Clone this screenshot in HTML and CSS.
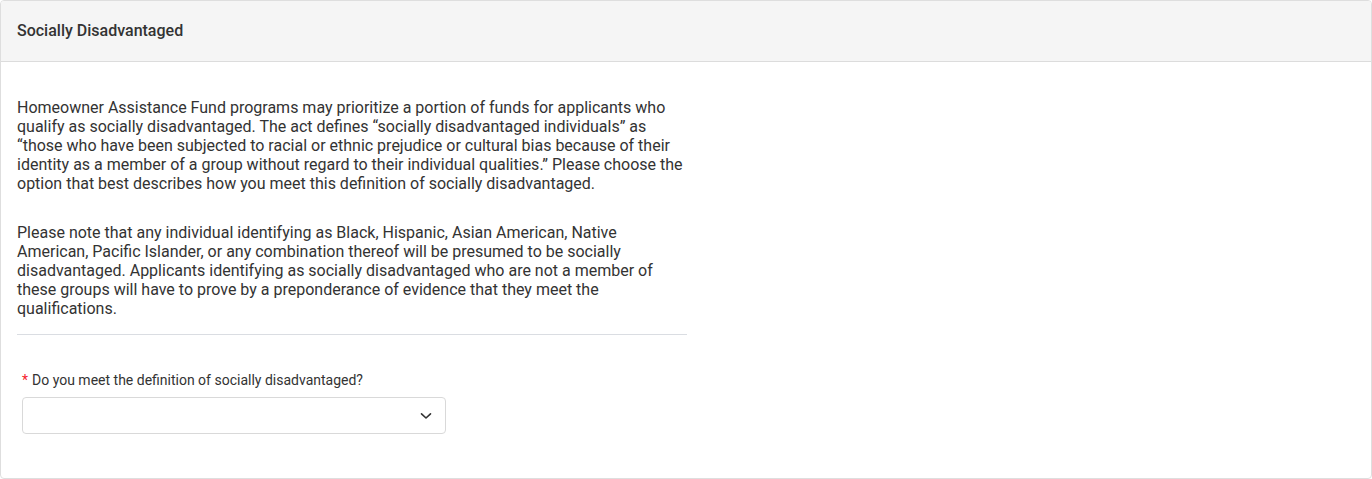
FILE: index.html
```html
<!DOCTYPE html>
<html lang="en">
<head>
<meta charset="utf-8">
<title>Socially Disadvantaged</title>
<link rel="stylesheet" href="styles.css">
</head>
<body>
<div class="card">
  <div class="card-header">
    <h2 class="card-title">Socially Disadvantaged</h2>
  </div>
  <div class="card-body">
    <div class="column">
      <p class="para">Homeowner Assistance Fund programs may prioritize a portion of funds for applicants who qualify as socially disadvantaged. The act defines “socially disadvantaged individuals” as “those who have been subjected to racial or ethnic prejudice or cultural bias because of their identity as a member of a group without regard to their individual qualities.” Please choose the option that best describes how you meet this definition of socially disadvantaged.</p>
      <p class="para para-second">Please note that any individual identifying as Black, Hispanic, Asian American, Native American, Pacific Islander, or any combination thereof will be presumed to be socially disadvantaged. Applicants identifying as socially disadvantaged who are not a member of these groups will have to prove by a preponderance of evidence that they meet the qualifications.</p>
      <hr class="divider">
      <div class="form-item">
        <label class="form-label"><span class="required">*</span>Do you meet the definition of socially disadvantaged?</label>
        <div class="select">
          <span class="select-value"></span>
          <svg class="chevron" width="12" height="8" viewBox="0 0 12 8" aria-hidden="true"><path d="M1.5 1.8 L6 6 L10.5 1.8" fill="none" stroke="#333" stroke-width="1.6" stroke-linecap="round" stroke-linejoin="round"/></svg>
        </div>
      </div>
    </div>
  </div>
</div>
</body>
</html>
```
FILE: styles.css
```css
* { box-sizing: border-box; }
html, body { margin: 0; padding: 0; background: #fff; }
body {
  font-family: Roboto, "Liberation Sans", Arial, sans-serif;
  color: #333;
  width: 1372px;
  height: 479px;
}
.card {
  border: 1px solid #dedede;
  border-radius: 4px;
  height: 479px;
  background: #fff;
  overflow: hidden;
}
.card-header {
  height: 61px;
  background: #f5f5f5;
  border-bottom: 1px solid #dcdcdc;
  display: flex;
  align-items: center;
  padding: 0 16px;
}
.card-title {
  margin: 0;
  font-size: 16px;
  font-weight: 500;
  color: #333;
  line-height: 20px;
}
.card-body {
  padding: 36px 16px 44px 16px;
}
.column {
  width: 670px;
}
.para {
  margin: 0;
  font-size: 16px;
  line-height: 19px;
  color: #333;
}
.para-second {
  margin-top: 30px;
}
.divider {
  margin: 16px 0 0 0;
  border: 0;
  border-top: 1px solid #dadde2;
  height: 0;
}
.form-item {
  margin: 35px 0 0 5px;
}
.form-label {
  display: block;
  font-size: 14px;
  line-height: 20px;
  color: #333;
  margin-bottom: 7px;
}
.required {
  color: #f5222d;
  margin-right: 4px;
}
.select {
  width: 424px;
  height: 37px;
  border: 1px solid #d9d9d9;
  border-radius: 4px;
  display: flex;
  align-items: center;
  justify-content: space-between;
  padding: 0 13px 0 11px;
  background: #fff;
}
.chevron { display: block; }
```
